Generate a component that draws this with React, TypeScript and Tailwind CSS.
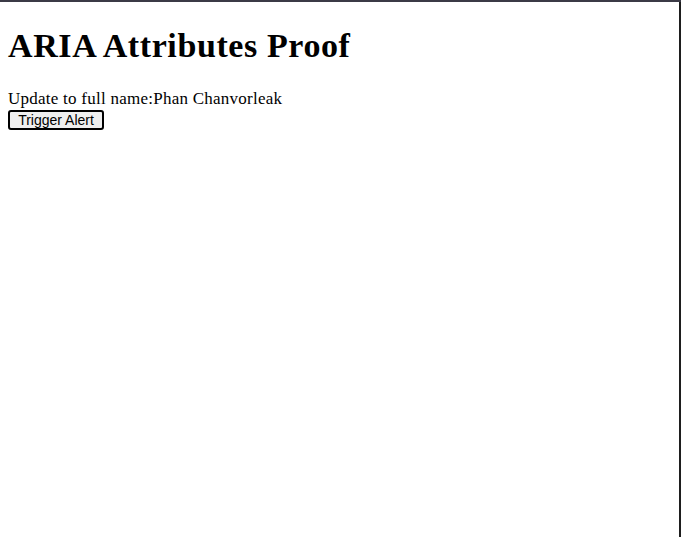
import React from 'react';

const App = () => {
  const fullName = 'Phan Chanvorleak';

  return (
    <div className="min-h-[537px] w-[681px] border-t-2 border-[#3b3a46] bg-white font-['Liberation_Serif',serif] text-black">
      <div className="min-h-[535px] border-r-2 border-[#1e1e1e] px-2 pt-[25px]">
        <h1 className="text-[34px] font-bold leading-[37px] tracking-[0.6px]" aria-label="ARIA Attributes Proof">
          ARIA Attributes Proof
        </h1>
        <div className="mt-[26px] text-[17px] leading-[18px] tracking-[0.25px]" aria-live="polite">
          Update to full name:{fullName}
        </div>
        <button
          type="button"
          aria-label="Trigger Alert"
          className="mt-[2px] flex h-[20px] w-[96px] items-center justify-center rounded-[3px] border-2 border-black bg-[#efefef] font-['Liberation_Sans',Arial,sans-serif] text-[14px] leading-none"
        >
          Trigger Alert
        </button>
      </div>
    </div>
  );
};

export default App;
